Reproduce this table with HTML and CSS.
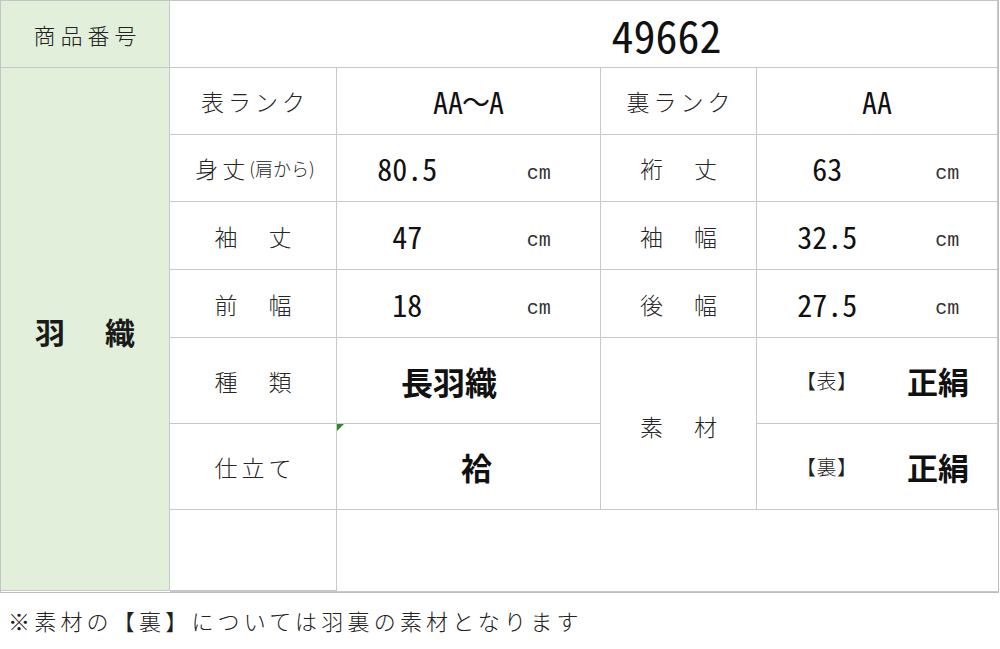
FILE: index.html
```html
<!DOCTYPE html>
<html lang="ja">
<head>
<meta charset="utf-8">
<link rel="stylesheet" href="styles.css">
</head>
<body>
<div class="sheet">
  <div class="cell head-label">商品番号</div>
  <div class="cell head-value"><span class="num big">49662</span></div>

  <div class="cell kind">羽　織</div>

  <div class="cell label">表ランク</div>
  <div class="cell value"><span class="num mid">AA</span><span class="wave">～</span><span class="num mid">A</span></div>
  <div class="cell label">裏ランク</div>
  <div class="cell value"><span class="num mid">AA</span></div>

  <div class="cell label">身丈<span class="small">(肩から)</span></div>
  <div class="cell measure"><span class="amt num mid">80.5</span><span class="unit">cm</span></div>
  <div class="cell label">裄　丈</div>
  <div class="cell measure right"><span class="amt num mid">63</span><span class="unit">cm</span></div>

  <div class="cell label">袖　丈</div>
  <div class="cell measure"><span class="amt num mid">47</span><span class="unit">cm</span></div>
  <div class="cell label">袖　幅</div>
  <div class="cell measure right"><span class="amt num mid">32.5</span><span class="unit">cm</span></div>

  <div class="cell label">前　幅</div>
  <div class="cell measure"><span class="amt num mid">18</span><span class="unit">cm</span></div>
  <div class="cell label">後　幅</div>
  <div class="cell measure right"><span class="amt num mid">27.5</span><span class="unit">cm</span></div>

  <div class="cell label">種　類</div>
  <div class="cell value strong type">長羽織</div>
  <div class="cell label material">素　材</div>
  <div class="cell fabric"><span class="side">【表】</span><span class="strong">正絹</span></div>

  <div class="cell label">仕立て</div>
  <div class="cell value strong tailor flagged">袷</div>
  <div class="cell fabric"><span class="side">【裏】</span><span class="strong">正絹</span></div>

  <div class="cell"></div>
  <div class="cell wide"></div>
</div>
<p class="note">※素材の【裏】については羽裏の素材となります</p>
</body>
</html>
```
FILE: styles.css
```css
html, body {
  margin: 0;
  padding: 0;
  background: #fff;
}
body {
  font-family: "Noto Sans CJK JP", sans-serif;
  color: #222;
}
.sheet {
  display: grid;
  width: max-content;
  grid-template-columns: 169px 167px 264px 156px 241px;
  grid-template-rows: 67px 67px 67px 68px 68px 86px 86px 81px;
  border-top: 1px solid #c4c4c4;
  border-left: 1px solid #c4c4c4;
  border-right: 1px solid #bdbdbd;
  border-bottom: 1px solid #bdbdbd;
}
.cell {
  box-sizing: border-box;
  border-right: 1px solid #c8c8c8;
  border-bottom: 1px solid #c8c8c8;
  display: flex;
  align-items: center;
  justify-content: center;
  background: #fff;
  position: relative;
}
.head-label {
  background: #e2efda;
  font-size: 22px;
  font-weight: 300;
  letter-spacing: 5px;
  padding-left: 5px;
  color: #222;
}
.head-value {
  grid-column: 2 / 6;
  padding-left: 166px;
}
.kind {
  grid-column: 1;
  grid-row: 2 / 9;
  background: #e2efda;
  font-size: 30px;
  font-weight: 700;
  letter-spacing: 5px;
  padding-left: 5px;
  padding-top: 4px;
  color: #1a1a1a;
}
.label {
  font-size: 23px;
  font-weight: 300;
  letter-spacing: 4px;
  padding-left: 4px;
  color: #262626;
}
.label .small {
  font-size: 18px;
  letter-spacing: 0;
}
.num {
  font-family: "Noto Sans CJK JP", sans-serif;
  font-feature-settings: "hwid" 1;
  color: #111;
}
.wave {
  font-size: 28px;
  color: #111;
  margin: 0 -1px;
}
.big {
  font-size: 44px;
  font-weight: 400;
}
.mid {
  font-size: 30px;
  font-weight: 400;
}
.measure {
  justify-content: flex-start;
}
.amt {
  width: 141px;
  text-align: center;
}
.unit {
  width: 123px;
  text-align: center;
  font-family: "Liberation Mono", monospace;
  font-size: 20px;
  color: #333;
  margin-top: 10px;
}
.measure.right .unit {
  width: 100px;
}
.strong {
  font-size: 31px;
  font-weight: 700;
  color: #111;
}
.type {
  justify-content: flex-start;
  padding-left: 64px;
  font-size: 32px;
}
.tailor {
  justify-content: flex-start;
  padding-left: 124px;
}
.material {
  grid-row: 6 / 8;
  grid-column: 4;
  padding-top: 4px;
}
.fabric {
  grid-column: 5;
  justify-content: flex-start;
  padding-left: 39px;
}
.fabric .side {
  font-size: 20px;
  font-weight: 300;
  letter-spacing: 0.5px;
  width: 111px;
  color: #222;
}
.fabric .strong {
  font-size: 31px;
}
.wide {
  grid-column: 2 / 6;
}
.flagged::before {
  content: "";
  position: absolute;
  left: 0;
  top: 0;
  border-top: 7px solid #2f8a2f;
  border-right: 7px solid transparent;
}
.note {
  margin: 14px 0 0 8px;
  font-size: 22px;
  font-weight: 300;
  letter-spacing: 4.2px;
  color: #222;
  line-height: 26px;
}
```
